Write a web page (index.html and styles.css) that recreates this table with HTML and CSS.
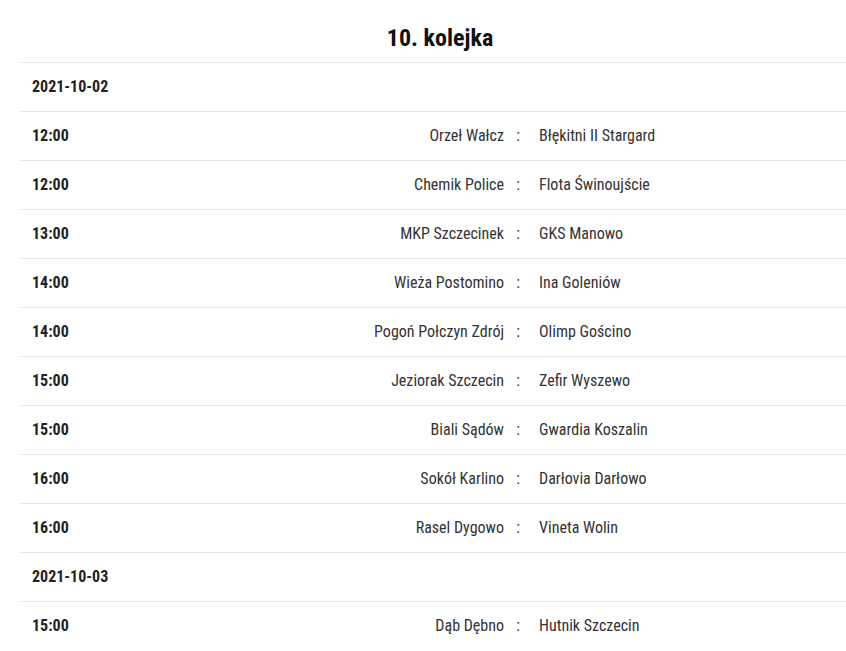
FILE: index.html
```html
<!DOCTYPE html>
<html lang="pl">
<head>
<meta charset="utf-8">
<title>10. kolejka</title>
<link rel="stylesheet" href="styles.css">
</head>
<body>
<div class="round">
  <h2 class="round-title">10. kolejka</h2>
  <div class="fixtures">
    <div class="row date-row"><span class="date">2021-10-02</span></div>
    <div class="row"><span class="time">12:00</span><span class="home">Orzeł Wałcz</span><span class="sep">:</span><span class="away">Błękitni II Stargard</span></div>
    <div class="row"><span class="time">12:00</span><span class="home">Chemik Police</span><span class="sep">:</span><span class="away">Flota Świnoujście</span></div>
    <div class="row"><span class="time">13:00</span><span class="home">MKP Szczecinek</span><span class="sep">:</span><span class="away">GKS Manowo</span></div>
    <div class="row"><span class="time">14:00</span><span class="home">Wieża Postomino</span><span class="sep">:</span><span class="away">Ina Goleniów</span></div>
    <div class="row"><span class="time">14:00</span><span class="home">Pogoń Połczyn Zdrój</span><span class="sep">:</span><span class="away">Olimp Gościno</span></div>
    <div class="row"><span class="time">15:00</span><span class="home">Jeziorak Szczecin</span><span class="sep">:</span><span class="away">Zefir Wyszewo</span></div>
    <div class="row"><span class="time">15:00</span><span class="home">Biali Sądów</span><span class="sep">:</span><span class="away">Gwardia Koszalin</span></div>
    <div class="row"><span class="time">16:00</span><span class="home">Sokół Karlino</span><span class="sep">:</span><span class="away">Darłovia Darłowo</span></div>
    <div class="row"><span class="time">16:00</span><span class="home">Rasel Dygowo</span><span class="sep">:</span><span class="away">Vineta Wolin</span></div>
    <div class="row date-row"><span class="date">2021-10-03</span></div>
    <div class="row"><span class="time">15:00</span><span class="home">Dąb Dębno</span><span class="sep">:</span><span class="away">Hutnik Szczecin</span></div>
  </div>
</div>
</body>
</html>
```
FILE: styles.css
```css
html, body {
  margin: 0;
  padding: 0;
  background: #fff;
  overflow: hidden;
}
body {
  font-family: "Roboto Condensed", "Liberation Sans Narrow", Roboto, sans-serif;
  color: #333;
}
.round {
  padding: 0 0 0 20px;
}
.round-title {
  margin: 0;
  height: 62px;
  box-sizing: border-box;
  padding: 22px 0 0 14px;
  text-align: center;
  font-size: 24px;
  font-weight: 700;
  line-height: 32px;
  color: #111;
}
.fixtures {
  border-top: 1px solid #e8e8e8;
}
.row {
  display: grid;
  grid-template-columns: 120px 1fr 28px 314px;
  align-items: center;
  height: 46px;
  box-sizing: content-box;
  border-bottom: 1px solid #e8e8e8;
  padding: 0 0 2px 12px;
  font-size: 16px;
}
.row:last-child {
  border-bottom: none;
}
.date-row {
  display: flex;
}
.date, .time {
  font-weight: 700;
  color: #222;
}
.home {
  text-align: right;
}
.sep {
  text-align: center;
}
.away {
  padding-left: 7px;
}
```
